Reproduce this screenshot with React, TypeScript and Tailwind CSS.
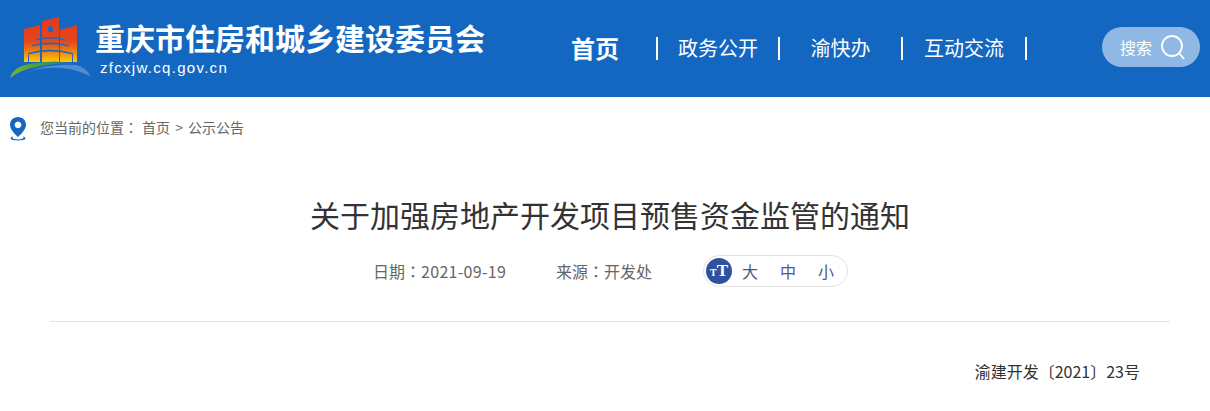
const cjk = { fontFamily: '"Noto Sans CJK SC", "Liberation Sans", sans-serif' };
const tcColon = { fontFamily: '"Noto Sans CJK TC", sans-serif' };

const Logo = () => (
  <svg width="100" height="75" viewBox="0 0 100 75" className="shrink-0">
    <defs>
      <linearGradient id="panel" gradientUnits="userSpaceOnUse" x1="0" y1="7" x2="0" y2="52">
        <stop offset="0" stopColor="#e0391f" />
        <stop offset="0.55" stopColor="#e4481c" />
        <stop offset="0.8" stopColor="#f28a10" />
        <stop offset="1" stopColor="#fdc808" />
      </linearGradient>
      <linearGradient id="swoosh" x1="0" y1="0" x2="1" y2="0">
        <stop offset="0" stopColor="#7ab72a" />
        <stop offset="0.5" stopColor="#3f9a4a" />
        <stop offset="1" stopColor="#1a6bc0" />
      </linearGradient>
    </defs>
    <path d="M24 19 L40 15 V52 L24 52 Z" fill="url(#panel)" />
    <path d="M42 11 L59 7 V52 L42 52 Z" fill="url(#panel)" />
    <path d="M60 20 L77 15 V52 L60 52 Z" fill="url(#panel)" />
    <ellipse cx="50.500" cy="19" rx="2.500" ry="3.200" fill="#1a6bc0" />
    <path d="M36 29 Q50 25 65 29 V30.500 Q50 26.500 36 30.500 Z" fill="#1a6bc0" />
    <path d="M32 35 Q50 30 69 35 V36.500 Q50 32 32 36.500 Z" fill="#1a6bc0" />
    <path d="M28 43 Q50 36 73 43 V44.500 Q50 38.500 28 44.500 Z" fill="#1a6bc0" />
    <path d="M28 45 V52 H29 V45 Z M41 40 V52 H42 V40 Z M59 40 V52 H60 V40 Z M72 44 V52 H73 V44 Z" fill="#1a6bc0" />
    <path d="M10 68 Q14 56 30 54 Q55 49 76 54 Q58 52 36 57 Q20 60 10 68 Z" fill="url(#swoosh)" />
    <path d="M26 62 Q50 53 76 55 Q86 57 91 67 Q80 60 62 58 Q44 57 26 62 Z" fill="#5b93d3" opacity="0.85" />
  </svg>
);

const Sep = () => <span className="w-[2px] h-[23px] bg-white shrink-0" />;

const Pin = () => (
  <svg width="18" height="25" viewBox="0 0 18 25" className="shrink-0">
    <path
      fillRule="evenodd"
      d="M9 1 C4.300 1 1 4.600 1 8.800 C1 13 5 17.500 9 21 C13 17.500 17 13 17 8.800 C17 4.600 13.700 1 9 1 Z M9 5.500 A3.400 3.400 0 1 1 8.999 5.500 Z"
      fill="#1467c1"
    />
    <path d="M4 20 Q1 21.500 1.500 22.800 Q3 24.500 9 24.500 Q15 24.500 16.500 22.800 Q17 21.500 14 20 Q15.500 21.800 14 22.500 Q11 23.500 9 23.500 Q7 23.500 4 22.500 Q2.500 21.800 4 20 Z" fill="#1467c1" />
  </svg>
);

const App = () => {
  return (
    <div className="w-[1210px] h-[411px] overflow-hidden bg-white" style={cjk}>
      <header className="h-[97px] bg-[#1467c1] flex items-center text-white">
        <div className="mt-[-2px]">
          <Logo />
        </div>
        <div className="w-[476px] shrink-0 mt-[-2px] ml-[-5px]">
          <div className="text-[30px] leading-[36px] font-bold whitespace-nowrap">重庆市住房和城乡建设委员会</div>
          <div className="text-[15px] leading-[18px] ml-[5px] mt-[4px] tracking-[1.300px] whitespace-nowrap" style={{ fontFamily: '"Liberation Sans", sans-serif' }}>
            zfcxjw.cq.gov.cn
          </div>
        </div>
        <nav className="flex items-center mt-[-1px] w-[469px] shrink-0">
          <span className="text-[24px] font-bold w-[85px] whitespace-nowrap">首页</span>
          <Sep />
          <span className="text-[20px] w-[120px] text-center whitespace-nowrap">政务公开</span>
          <Sep />
          <span className="text-[20px] w-[121px] text-center whitespace-nowrap">渝快办</span>
          <Sep />
          <span className="text-[20px] w-[122px] text-center whitespace-nowrap">互动交流</span>
          <Sep />
        </nav>
        <div className="ml-[62px] w-[98px] h-[40px] rounded-full bg-[#8fb8e4] flex items-center pl-[18px] gap-[8px] mt-[-3px] shrink-0">
          <span className="text-[16px] whitespace-nowrap">搜索</span>
          <svg width="26" height="26" viewBox="0 0 26 26" fill="none" stroke="white" strokeWidth="1.800">
            <circle cx="12" cy="12" r="10" />
            <path d="M19 19 L24 25" />
          </svg>
        </div>
      </header>

      <div className="h-[62px] flex items-center pl-[9px] gap-[13px] text-[14px] text-[#666666]">
        <Pin />
        <span className="whitespace-nowrap mt-[-2px]">
          您当前的位置<span style={tcColon}>：</span>
          <span className="ml-[4px]">首页</span>
          <span className="mx-[2px]"> &gt; </span>
          公示公告
        </span>
      </div>

      <h1 className="mt-[35px] text-[30px] leading-[40px] text-[#333333] font-normal text-center pl-[10px]">
        关于加强房地产开发项目预售资金监管的通知
      </h1>

      <div className="mt-[21px] h-[32px] flex items-center pl-[373px] text-[16px] text-[#666666]">
        <span className="w-[183px] whitespace-nowrap">日期<span style={tcColon}>：</span><span className="tracking-[0.300px]">2021-09-19</span></span>
        <span className="w-[147px] whitespace-nowrap">来源<span style={tcColon}>：</span>开发处</span>
        <div className="w-[145px] h-[32px] rounded-full border border-[#e3e3e3] flex items-center pl-[2px] text-[#4a5a80]">
          <span className="w-[26px] h-[26px] rounded-full bg-[#2f52a0] text-white flex items-center justify-center font-bold" style={{ fontFamily: '"Liberation Serif", serif' }}>
            <span className="text-[10px] leading-none mt-[4px]">T</span>
            <span className="text-[17px] leading-none mt-[-1px]">T</span>
          </span>
          <span className="ml-[10px] w-[16px]">大</span>
          <span className="ml-[22px] w-[16px]">中</span>
          <span className="ml-[22px] w-[16px]">小</span>
        </div>
      </div>

      <div className="ml-[50px] mr-[40px] mt-[34px] h-px bg-[#e5e5e5]" />

      <p className="mt-[37px] pr-[70px] text-right text-[16px] leading-[24px] text-[#333333]">渝建开发〔2021〕23号</p>
    </div>
  );
};

export default App;
